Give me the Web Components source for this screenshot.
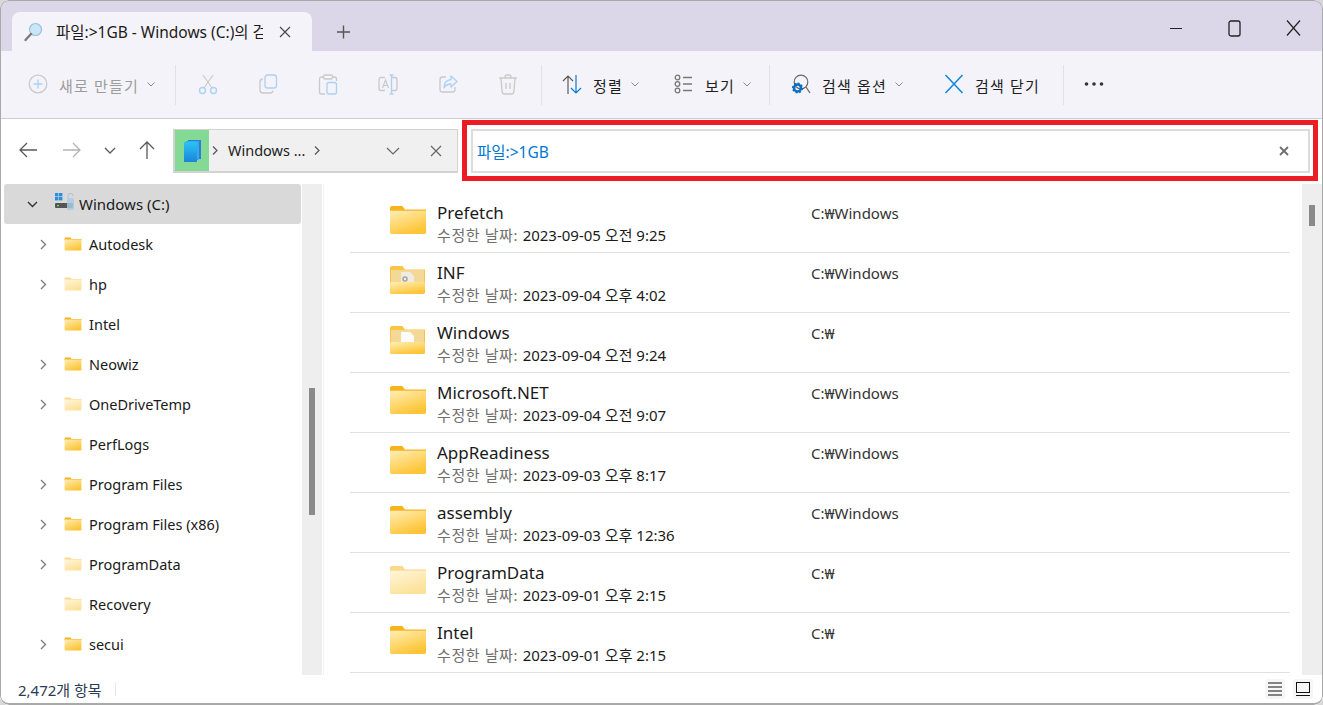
<!DOCTYPE html>
<html lang="ko">
<head>
<meta charset="utf-8">
<title>파일 탐색기</title>
<style>
    html, body { margin: 0; height: 100%; background: #d8d8d8; overflow: hidden; }
    body { font-family: "Noto Sans", "Noto Sans CJK KR", sans-serif; font-size: 14px; color: #1a1a1a; }
</style>
</head>
<body>

<fe-window>
    <fe-titlebar slot="top">파일:&gt;1GB - Windows (C:)의 검색 결과</fe-titlebar>
    <fe-toolbar slot="top">
        <fe-tool icon="new" w="152" pad="10" chevron disabled>새로 만들기</fe-tool>
        <fe-sep l="5" r="2"></fe-sep>
        <fe-tool icon="cut" w="60" center></fe-tool>
        <fe-tool icon="copy" w="60" center></fe-tool>
        <fe-tool icon="paste" w="60" center></fe-tool>
        <fe-tool icon="rename" w="60" center></fe-tool>
        <fe-tool icon="share" w="60" center></fe-tool>
        <fe-tool icon="trash" w="60" center></fe-tool>
        <fe-sep l="3" r="9"></fe-sep>
        <fe-tool icon="sort" w="113" pad="11" chevron>정렬</fe-tool>
        <fe-tool icon="view" w="95" pad="10" chevron>보기</fe-tool>
        <fe-sep l="10" r="10"></fe-sep>
        <fe-tool icon="options" w="153" pad="11" chevron>검색 옵션</fe-tool>
        <fe-tool icon="close" w="120" pad="11">검색 닫기</fe-tool>
        <fe-sep l="10" r="10"></fe-sep>
        <fe-tool icon="more" w="40" pad="10"></fe-tool>
    </fe-toolbar>
    <fe-addressbar slot="top" query="파일:&gt;1GB"></fe-addressbar>

    <fe-tree slot="left">
        <fe-tree-item kind="drive" open>Windows (C:)</fe-tree-item>
        <fe-tree-item expand>Autodesk</fe-tree-item>
        <fe-tree-item expand faded>hp</fe-tree-item>
        <fe-tree-item>Intel</fe-tree-item>
        <fe-tree-item expand>Neowiz</fe-tree-item>
        <fe-tree-item expand faded>OneDriveTemp</fe-tree-item>
        <fe-tree-item>PerfLogs</fe-tree-item>
        <fe-tree-item expand>Program Files</fe-tree-item>
        <fe-tree-item expand>Program Files (x86)</fe-tree-item>
        <fe-tree-item expand faded>ProgramData</fe-tree-item>
        <fe-tree-item faded>Recovery</fe-tree-item>
        <fe-tree-item expand>secui</fe-tree-item>
    </fe-tree>

    <fe-list slot="right">
        <fe-row path="C:₩Windows" date="2023-09-05 오전 9:25">Prefetch</fe-row>
        <fe-row path="C:₩Windows" date="2023-09-04 오후 4:02" kind="gear">INF</fe-row>
        <fe-row path="C:₩" date="2023-09-04 오전 9:24" kind="doc">Windows</fe-row>
        <fe-row path="C:₩Windows" date="2023-09-04 오전 9:07">Microsoft.NET</fe-row>
        <fe-row path="C:₩Windows" date="2023-09-03 오후 8:17">AppReadiness</fe-row>
        <fe-row path="C:₩Windows" date="2023-09-03 오후 12:36">assembly</fe-row>
        <fe-row path="C:₩" date="2023-09-01 오후 2:15" kind="faded">ProgramData</fe-row>
        <fe-row path="C:₩" date="2023-09-01 오후 2:15">Intel</fe-row>
    </fe-list>

    <fe-statusbar slot="bottom">2,472개 항목</fe-statusbar>
</fe-window>

<script>
// Les icônes de la barre d'outils
const GREY = '#c9c9c9', SKY = '#a9d2f3';
const TOOL_ICONS = {
    new: `<circle cx="10" cy="10" r="8.8" fill="none" stroke="${GREY}" stroke-width="1.3"/><path d="M10 5.5v9M5.5 10h9" stroke="${SKY}" stroke-width="1.3"/>`,
    cut: `<path d="M5 1l9 13M15 1L6 14" stroke="${GREY}" stroke-width="1.2" fill="none"/><circle cx="4.5" cy="16.5" r="3" fill="none" stroke="${SKY}" stroke-width="1.4"/><circle cx="15.5" cy="16.5" r="3" fill="none" stroke="${SKY}" stroke-width="1.4"/>`,
    copy: `<rect x="7" y="1" width="11.5" height="13" rx="2.5" fill="none" stroke="${SKY}" stroke-width="1.3"/><path d="M4.8 5A3 3 0 0 0 2 8v8a3 3 0 0 0 3 3h7a3 3 0 0 0 3-2.4" fill="none" stroke="${GREY}" stroke-width="1.3"/>`,
    paste: `<path d="M5 3H3.5A2 2 0 0 0 1.5 5v13a2 2 0 0 0 2 2H7M15 3h1.500a2 2 0 0 1 2 2v2" fill="none" stroke="${GREY}" stroke-width="1.3"/><rect x="5.500" y="1" width="9" height="4" rx="1.500" fill="none" stroke="${GREY}" stroke-width="1.3"/><rect x="9" y="8.500" width="9.500" height="11.500" rx="2" fill="none" stroke="${SKY}" stroke-width="1.3"/>`,
    rename: `<path d="M7 3.500H3a2 2 0 0 0-2 2v9a2 2 0 0 0 2 2h4M14 3.500h3a2 2 0 0 1 2 2v9a2 2 0 0 1-2 2h-3" fill="none" stroke="${GREY}" stroke-width="1.3"/><path d="M4.500 14L7.500 6l3 8M5.500 11.500h4" fill="none" stroke="${GREY}" stroke-width="1.2"/><path d="M11.500 1h4M11.500 20h4M13.500 1v19" fill="none" stroke="${SKY}" stroke-width="1.3"/>`,
    share: `<path d="M8 3H4.500A2.500 2.500 0 0 0 2 5.500v10A2.500 2.500 0 0 0 4.500 18h10a2.500 2.500 0 0 0 2.500-2.500V13" fill="none" stroke="${GREY}" stroke-width="1.3"/><path d="M13 2l6 5.500-6 5.500V10c-3.500 0-5.500 1-7 4 0-5 2.500-8 7-8.500z" fill="none" stroke="${SKY}" stroke-width="1.3" stroke-linejoin="round"/>`,
    trash: `<path d="M1 4h18M7 4V3a2 2 0 0 1 2-2h2a2 2 0 0 1 2 2v1M3 4l1 13a3 3 0 0 0 3 3h6a3 3 0 0 0 3-3l1-13M8 9v6M12 9v6" fill="none" stroke="${GREY}" stroke-width="1.3"/>`,
    sort: `<path d="M6 20V2M1 7l5-5 5 5" fill="none" stroke="#5a5a5a" stroke-width="1.2"/><path d="M14 1v18M9 14l5 5 5-5" fill="none" stroke="#0a7ad1" stroke-width="1.2"/>`,
    view: `<g fill="none" stroke="#777" stroke-width="1.300"><circle cx="3.500" cy="3.500" r="2.300"/><circle cx="3.500" cy="10" r="2.300"/><circle cx="3.500" cy="16.500" r="2.300"/><path d="M9 3.500h9M9 10h9M9 16.500h9"/></g>`,
    options: `<circle cx="10" cy="8" r="6.800" fill="none" stroke="#666" stroke-width="1.200"/><path d="M15 13l4 6" stroke="#666" stroke-width="1.300"/><circle cx="6.500" cy="14" r="3.500" fill="none" stroke="#0a6fc4" stroke-width="2.500"/><circle cx="6.500" cy="14" r="4.800" fill="none" stroke="#0a6fc4" stroke-width="1.500" stroke-dasharray="2 1.700"/>`,
    close: `<path d="M1.500 1l17 18M18.500 1l-17 18" stroke="#0f86dc" stroke-width="1.500" fill="none"/>`,
    more: `<g fill="#333"><circle cx="2.500" cy="10" r="1.800"/><circle cx="10" cy="10" r="1.800"/><circle cx="17.500" cy="10" r="1.800"/></g>`
};

// Le dossier, en trois variantes
function folderSvg(w, h, kind) {
    const open = kind === 'gear' || kind === 'doc';
    const faded = kind === 'faded';
    let inner = `<path d="M1 3a2 2 0 0 1 2-2h9.500c1 0 1.500.5 2.500 2.200l.8 1.300H37v3H1z" fill="#f8b41b"/>
        <rect x="1" y="5" width="36" height="24" rx="1.500" fill="url(#g)"/>
        <rect x="1.500" y="5" width="35" height=".8" fill="#f4b53a"/>`;
    if (open) {
        inner = `<path d="M1 3a2 2 0 0 1 2-2h9.500c1 0 1.500.5 2.500 2.200l.8 1.300H36v14H1z" fill="#fbc544"/>
            <rect x="2" y="5" width="33" height="13" fill="#f4d898"/>
            <path d="M12 7h9l4 4v8H12z" fill="${kind === 'doc' ? '#fbfbfb' : '#f1ece2'}"/>
            ${kind === 'gear' ? '<circle cx="16" cy="14" r="2" fill="none" stroke="#a3a3a3" stroke-width="1.500"/>' : ''}
            <rect x="1" y="17" width="35" height="12" rx="1.500" fill="url(#g)"/>`;
    }
    return `<svg width="${w}" height="${h}" viewBox="0 0 38 30" opacity="${faded ? .5 : 1}">
        <defs><linearGradient id="g" x1="0" y1="0" x2=".5" y2="1"><stop offset="0" stop-color="#ffefb8"/><stop offset="1" stop-color="#fdc537"/></linearGradient></defs>
        ${inner}</svg>`;
}

class FeWindow extends HTMLElement {
    constructor() {
        super();
        this.attachShadow({ mode: 'open' });
        this.shadowRoot.innerHTML = `
            <style>
                :host {
                    display: flex; flex-direction: column; position: relative;
                    width: 1323px; height: 705px; background: #fff;
                    border-radius: 9px 9px 9px 9px; overflow: hidden;
                }
                /* Le liseré de la fenêtre passe au-dessus du contenu */
                :host::after {
                    content: ''; position: absolute; inset: 0; pointer-events: none;
                    border: 1px solid #a9a9a9; border-bottom-width: 2px; border-radius: 9px;
                }
                .main { flex: 1; min-height: 0; display: flex; }
            </style>
            <slot name="top"></slot>
            <div class="main"><slot name="left"></slot><slot name="right"></slot></div>
            <slot name="bottom"></slot>`;
    }
}

class FeTitlebar extends HTMLElement {
    constructor() {
        super();
        this.attachShadow({ mode: 'open' });
        this.shadowRoot.innerHTML = `
            <style>
                :host { display: flex; height: 51px; background: #dcd7e8; box-sizing: border-box; padding: 12px 0 0 12px; }
                .tab {
                    width: 300px; height: 39px; box-sizing: border-box; background: #f4f3f9;
                    border-radius: 8px 8px 0 0; display: flex; align-items: center; padding-left: 11px;
                }
                .title { width: 207px; margin-left: 13px; white-space: nowrap; overflow: hidden; color: #1c1c1c; font-size: 15.500px; }
                .x { margin-left: 16px; display: flex; }
                .plus { margin: 12px 0 0 25px; display: flex; height: 16px; }
                .caption { display: flex; margin: -12px 1px 0 auto; }
                .caption div { width: 58px; height: 56px; display: flex; align-items: center; justify-content: center; }
                .caption div.mid { width: 59px; }
                .caption i { display: block; width: 12px; height: 1px; background: #222; }
            </style>
            <div class="tab">
                <svg width="20" height="20" viewBox="0 0 20 20"><circle cx="12.500" cy="7.500" r="6" fill="#c7e6f8" stroke="#9dbfd6" stroke-width="1.200"/><path d="M8 12l-5.500 6" stroke="#7c7c7c" stroke-width="2.400" stroke-linecap="round"/></svg>
                <div class="title"><slot></slot></div>
                <svg class="x" width="12" height="12" viewBox="0 0 12 12"><path d="M1 1l10 10M11 1L1 11" stroke="#444" stroke-width="1.100" fill="none"/></svg>
            </div>
            <svg class="plus" width="13" height="13" viewBox="0 0 13 13"><path d="M6.500 0v13M0 6.500h13" stroke="#555" stroke-width="1.400"/></svg>
            <div class="caption">
                <div><i></i></div>
                <div class="mid"><svg width="13" height="17" viewBox="0 0 13 17"><rect x="1" y="1" width="11" height="15" rx="2" fill="none" stroke="#222" stroke-width="1.300"/></svg></div>
                <div><svg width="15" height="16" viewBox="0 0 15 16"><path d="M1 .5l13 15M14 .5L1 15.500" stroke="#222" stroke-width="1.200" fill="none"/></svg></div>
            </div>`;
    }
}

class FeToolbar extends HTMLElement {
    constructor() {
        super();
        this.attachShadow({ mode: 'open' });
        this.shadowRoot.innerHTML = `
            <style>
                :host {
                    display: flex; align-items: center; height: 68px; box-sizing: border-box;
                    padding: 0 0 0 18px; background: #f4f3f9; border-bottom: 1px solid #cfcdd6;
                }
            </style>
            <slot></slot>`;
    }
}

class FeSep extends HTMLElement {
    constructor() {
        super();
        this.attachShadow({ mode: 'open' });
        this.shadowRoot.innerHTML = `
            <style>:host { display: block; width: 1px; height: 40px; background: #e1e0e8; flex: none; }</style>`;
    }
    connectedCallback() {
        this.style.marginLeft = this.getAttribute('l') + 'px';
        this.style.marginRight = this.getAttribute('r') + 'px';
    }
}

class FeTool extends HTMLElement {
    constructor() {
        super();
        this.attachShadow({ mode: 'open' });
    }
    connectedCallback() {
        const icon = this.getAttribute('icon');
        this.style.width = this.getAttribute('w') + 'px';
        const pad = this.getAttribute('pad') || 0;
        const chevron = this.hasAttribute('chevron')
            ? `<svg class="chev" width="8" height="5" viewBox="0 0 8 5"><path d="M.5.500L4 4 7.500.500" fill="none" stroke="#8a8a8a" stroke-width="1"/></svg>` : '';
        this.shadowRoot.innerHTML = `
            <style>
                :host {
                    display: flex; align-items: center; height: 40px; flex: none; box-sizing: border-box;
                    padding-left: ${pad}px; ${this.hasAttribute('center') ? 'justify-content: center;' : ''}
                    color: ${this.hasAttribute('disabled') ? '#9c9c9c' : '#1e1e1e'};
                    font-size: 15px; letter-spacing: 1.200px; white-space: nowrap;
                }
                svg.ic { width: 20px; height: 21px; flex: none; }
                .t { margin: 2px 0 0 11px; }
                .t:empty { display: none; }
                .chev { margin-left: 8px; }
            </style>
            <svg class="ic" viewBox="0 0 20 21">${TOOL_ICONS[icon]}</svg>
            ${this.textContent ? '<span class="t"><slot></slot></span>' : ''}
            ${chevron}`;
    }
}

class FeAddressbar extends HTMLElement {
    constructor() {
        super();
        this.attachShadow({ mode: 'open' });
    }
    connectedCallback() {
        this.shadowRoot.innerHTML = `
            <style>
                :host { display: flex; height: 65px; box-sizing: border-box; padding: 1px 0 0 10px; background: #fff; flex: none; }
                .nav { width: 36px; height: 40px; margin-top: 10px; display: flex; align-items: center; justify-content: center; flex: none; }
                .crumb {
                    width: 285px; height: 44px; margin: 9px 4px 0 8px; box-sizing: border-box; flex: none;
                    background: #f0f0f0; border: 1px solid #d2d2d2; border-width: 1px 1px 2px 2px;
                    display: flex; align-items: center; color: #222; font-size: 14.500px;
                }
                .drive { width: 34px; align-self: stretch; background: #84d994; display: flex; align-items: center; justify-content: center; flex: none; padding-left: 2px; box-sizing: border-box; }
                .crumb .c1 { margin-left: 3px; display: flex; }
                .crumb .w { margin-left: 10px; width: 80px; white-space: nowrap; padding-bottom: 2px; }
                .crumb .c2 { margin-left: 6px; display: flex; }
                .crumb .c3 { margin-left: 66px; display: flex; }
                .crumb .c4 { margin-left: 30px; display: flex; }
                .mark {
                    width: 856px; height: 61px; box-sizing: border-box; flex: none;
                    border: 5px solid #ed1c24; padding: 4px 3px 3px 4px;
                }
                .search {
                    height: 100%; box-sizing: border-box; border: 2px solid #dcdcdc; background: #fff;
                    display: flex; align-items: center; justify-content: space-between; padding: 0 19px 0 4px;
                    color: #0078d4; font-size: 15.500px;
                }
            </style>
            <div class="nav"><svg width="18" height="16" viewBox="0 0 18 16"><path d="M18 8H1M8 1L1 8l7 7" fill="none" stroke="#5a5a5a" stroke-width="1.300"/></svg></div>
            <div class="nav" style="margin-left:8px"><svg width="18" height="16" viewBox="0 0 18 16"><path d="M0 8h17M10 1l7 7-7 7" fill="none" stroke="#b3b3b3" stroke-width="1.300"/></svg></div>
            <div class="nav" style="margin-left:2px"><svg width="12" height="7" viewBox="0 0 12 7"><path d="M1 1l5 5 5-5" fill="none" stroke="#5a5a5a" stroke-width="1.300"/></svg></div>
            <div class="nav" style="margin-left:1px"><svg width="16" height="18" viewBox="0 0 16 18"><path d="M8 18V1M1 8l7-7 7 7" fill="none" stroke="#5a5a5a" stroke-width="1.300"/></svg></div>
            <div class="crumb">
                <div class="drive"><svg width="18" height="22" viewBox="0 0 18 22"><defs><linearGradient id="c" x1="0" y1="0" x2="0" y2="1"><stop offset="0" stop-color="#2bc4f4"/><stop offset="1" stop-color="#1a84dc"/></linearGradient></defs><path d="M4 0h13v19H4z" fill="#2b7fd8"/><path d="M2 1h13v19H2z" fill="#3aa6ec"/><path d="M0 2h13v20H0z" fill="url(#c)"/></svg></div>
                <svg class="c1" width="6" height="9" viewBox="0 0 6 9"><path d="M1 .5l4 4-4 4" fill="none" stroke="#555" stroke-width="1.200"/></svg>
                <span class="w">Windows ...</span>
                <svg class="c2" width="6" height="9" viewBox="0 0 6 9"><path d="M1 .5l4 4-4 4" fill="none" stroke="#555" stroke-width="1.200"/></svg>
                <svg class="c3" width="14" height="8" viewBox="0 0 14 8"><path d="M1 1l6 6 6-6" fill="none" stroke="#666" stroke-width="1.200"/></svg>
                <svg class="c4" width="12" height="12" viewBox="0 0 12 12"><path d="M1 1l10 10M11 1L1 11" fill="none" stroke="#666" stroke-width="1.200"/></svg>
            </div>
            <div class="mark">
                <div class="search">
                    <span>${this.getAttribute('query').replace('>', '&gt;')}</span>
                    <svg width="10" height="10" viewBox="0 0 10 10"><path d="M1 1l8 8M9 1L1 9" fill="none" stroke="#6e6e6e" stroke-width="1.800"/></svg>
                </div>
            </div>`;
    }
}

// La barre de défilement, commune aux deux volets
class FeScrollbar extends HTMLElement {
    constructor() {
        super();
        this.attachShadow({ mode: 'open' });
        this.shadowRoot.innerHTML = `
            <style>
                :host { display: block; width: 20px; flex: none; background: #eeeeee; box-sizing: border-box; padding-left: 7px; }
                .thumb { width: 6px; background: #8a8a8a; }
            </style>
            <div class="thumb"></div>`;
    }
    connectedCallback() {
        const t = this.shadowRoot.querySelector('.thumb');
        t.style.marginTop = this.getAttribute('top') + 'px';
        t.style.height = this.getAttribute('size') + 'px';
    }
}

class FeTree extends HTMLElement {
    constructor() {
        super();
        this.attachShadow({ mode: 'open' });
        this.shadowRoot.innerHTML = `
            <style>
                :host { display: flex; flex: none; box-sizing: border-box; padding-left: 4px; border-right: 1px solid #f2f2f2; width: 324px; background: #fff; }
                .items { width: 298px; flex: none; overflow: hidden; }
            </style>
            <div class="items"><slot></slot></div>
            <fe-scrollbar top="204" size="127"></fe-scrollbar>`;
    }
}

class FeTreeItem extends HTMLElement {
    constructor() {
        super();
        this.attachShadow({ mode: 'open' });
    }
    connectedCallback() {
        const drive = this.getAttribute('kind') === 'drive';
        const chev = this.hasAttribute('expand')
            ? `<svg width="7" height="11" viewBox="0 0 7 11"><path d="M1 1l4.500 4.500L1 10" fill="none" stroke="#7a7a7a" stroke-width="1.300"/></svg>`
            : drive ? `<svg width="11" height="7" viewBox="0 0 11 7"><path d="M1 1l4.500 4.500L10 1" fill="none" stroke="#333" stroke-width="1.400"/></svg>` : '';
        const icon = drive
            ? `<svg width="20" height="18" viewBox="0 0 20 18">
                <g fill="#2b8fe0"><rect x="1" y="0" width="3.400" height="3.400"/><rect x="5" y="0" width="3.400" height="3.400"/><rect x="1" y="4" width="3.400" height="3.400"/><rect x="5" y="4" width="3.400" height="3.400"/></g>
                <path d="M14 5V3a2.500 2.500 0 0 1 5 0" fill="none" stroke="#b9c4cc" stroke-width="1.200"/>
                <rect x="1" y="10" width="18" height="5" rx="1" fill="#555"/><rect x="3" y="12" width="2" height="1.300" fill="#5fe35f"/>
                <rect x="13" y="5" width="7" height="12" rx="1.500" fill="#a9cbe0" opacity=".85"/></svg>`
            : folderSvg(18, 14, this.hasAttribute('faded') ? 'faded' : '');
        this.shadowRoot.innerHTML = `
            <style>
                :host {
                    display: flex; align-items: center; height: 40px; box-sizing: border-box;
                    padding-left: ${drive ? 23 : 34}px; color: #1a1a1a; font-size: ${drive ? 15 : 14.5}px; white-space: nowrap;
                    ${drive ? 'background: #d9d9d9; border-radius: 3px; margin-right: 1px;' : ''}
                }
                .c { width: 11px; display: flex; justify-content: center; flex: none; }
                .i { margin-left: ${drive ? 16 : 15}px; display: flex; flex: none; ${drive ? 'margin-top:-4px;width:20px;' : ''} }
                .t { margin-left: ${drive ? 5 : 7}px; }
            </style>
            <span class="c">${chev}</span>
            <span class="i">${icon}</span>
            <span class="t"><slot></slot></span>`;
    }
}

class FeList extends HTMLElement {
    constructor() {
        super();
        this.attachShadow({ mode: 'open' });
        this.shadowRoot.innerHTML = `
            <style>
                :host { display: flex; flex: 1; min-width: 0; background: #fff; }
                .rows { flex: 1; min-width: 0; padding: 9px 12px 0 26px; overflow: hidden; }
            </style>
            <div class="rows"><slot></slot></div>
            <fe-scrollbar style="width:21px" top="21" size="21"></fe-scrollbar>`;
    }
}

class FeRow extends HTMLElement {
    constructor() {
        super();
        this.attachShadow({ mode: 'open' });
    }
    connectedCallback() {
        this.shadowRoot.innerHTML = `
            <style>
                :host {
                    display: grid; grid-template-columns: 87px 374px 1fr; height: 60px; box-sizing: border-box;
                    border-bottom: 1px solid #e0e0e0; align-items: center; padding-top: 2px;
                }
                .ic { padding-left: 39px; display: flex; align-self: start; margin-top: 10px; }
                .name { font-size: 17px; line-height: 22px; color: #1a1a1a; white-space: nowrap; }
                .meta { font-size: 15px; line-height: 22px; color: #6e6e6e; white-space: nowrap; }
                .meta span { letter-spacing: .6px; }
                .meta b { font-weight: 400; color: #1a1a1a; letter-spacing: 0; }
                .path { font-size: 15px; color: #333; align-self: start; margin-top: 7px; line-height: 22px; }
            </style>
            <div class="ic">${folderSvg(38, 30, this.getAttribute('kind') || '')}</div>
            <div>
                <div class="name"><slot></slot></div>
                <div class="meta"><span>수정한 날짜: </span><b>${this.getAttribute('date')}</b></div>
            </div>
            <div class="path">${this.getAttribute('path')}</div>`;
    }
}

class FeStatusbar extends HTMLElement {
    constructor() {
        super();
        this.attachShadow({ mode: 'open' });
        this.shadowRoot.innerHTML = `
            <style>
                :host {
                    display: flex; align-items: center; height: 30px; flex: none; box-sizing: border-box;
                    padding: 0 10px 2px 18px; background: #fff; color: #2c3b52; font-size: 15px;
                }
                .sep { width: 1px; height: 14px; background: #e8e8e8; margin-left: 13px; }
                .btn { width: 20px; height: 20px; background: #f6f6f6; border-radius: 3px; display: flex; align-items: center; justify-content: center; }
                .btn:first-of-type { margin-left: auto; }
                .btn + .btn { margin-left: 8px; }
            </style>
            <span><slot></slot></span>
            <span class="sep"></span>
            <div class="btn"><svg width="14" height="14" viewBox="0 0 14 14"><path d="M0 1h14M0 5h14M0 9h14M0 13h14" stroke="#111" stroke-width="1.100"/></svg></div>
            <div class="btn"><svg width="14" height="14" viewBox="0 0 14 14"><rect x=".5" y=".5" width="13" height="10" fill="none" stroke="#111"/><path d="M0 13.500h14" stroke="#111"/></svg></div>`;
    }
}

// Déclaration des balises personnalisées
customElements.define('fe-scrollbar', FeScrollbar);
customElements.define('fe-window', FeWindow);
customElements.define('fe-titlebar', FeTitlebar);
customElements.define('fe-toolbar', FeToolbar);
customElements.define('fe-sep', FeSep);
customElements.define('fe-tool', FeTool);
customElements.define('fe-addressbar', FeAddressbar);
customElements.define('fe-tree', FeTree);
customElements.define('fe-tree-item', FeTreeItem);
customElements.define('fe-list', FeList);
customElements.define('fe-row', FeRow);
customElements.define('fe-statusbar', FeStatusbar);
</script>
</body>
</html>
